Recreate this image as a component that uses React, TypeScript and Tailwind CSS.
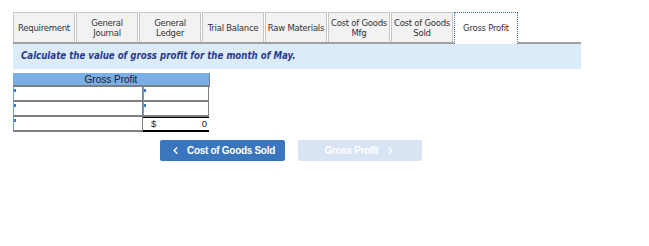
import { ChevronLeft, ChevronRight } from "lucide-react";

const tabs = [
  ["Requirement"],
  ["General", "Journal"],
  ["General", "Ledger"],
  ["Trial Balance"],
  ["Raw Materials"],
  ["Cost of Goods", "Mfg"],
  ["Cost of Goods", "Sold"],
];

function InputCell({ wide }: { wide?: boolean }) {
  return (
    <div
      className={`${wide ? "w-[130px]" : "w-[66px]"} h-[15px] bg-white border-b-2 border-[#7f7f7f] border-r border-r-[#7f7f7f] relative`}
    >
      <span className="absolute left-0 top-0 w-px h-full bg-[#6f9fd8]" />
      <span className="absolute left-px top-[2px] w-[2px] h-[3px] bg-[#3a78c9]" />
    </div>
  );
}

export default function App() {
  return (
    <div
      className="w-[649px] h-[246px] bg-white pt-[12px] pl-[13px]"
      style={{ fontFamily: "'DejaVu Sans', Verdana, sans-serif" }}
    >
      <div className="w-[568px]">
        {/* tab strip */}
        <div className="flex items-end h-[32px] border-b-2 border-[#a0a0a0]">
          {tabs.map((t, i) => (
            <div
              key={i}
              className="w-[62px] h-[30px] mr-[1px] bg-[#f2f2f2] border border-[#c6c6c6] border-b-0 flex flex-col items-center justify-center text-[8.5px] leading-[10px] text-[#333] text-center tracking-[-0.25px]"
            >
              {t.map((l) => (
                <span key={l} className="whitespace-nowrap">
                  {l}
                </span>
              ))}
            </div>
          ))}
          <div className="w-[64px] h-[32px] -mb-[2px] bg-white border border-dotted border-[#3d6fb5] border-b-0 flex items-center justify-center text-[8.5px] text-[#333] tracking-[-0.25px]">
            Gross Profit
          </div>
        </div>

        {/* instruction band */}
        <div className="h-[25px] bg-[#dbebf9] flex items-center pl-[8px]">
          <span
            className="text-[9.6px] font-bold italic text-[#2a3a8a]"
            style={{ fontFamily: "'DejaVu Sans Condensed', 'DejaVu Sans', sans-serif" }}
          >
            Calculate the value of gross profit for the month of May.
          </span>
        </div>
      </div>

      {/* table */}
      <div className="mt-[4px] w-[197px]" style={{ fontFamily: "'Liberation Sans', Arial, sans-serif" }}>
        <div className="h-[14px] bg-[#7aaee6] border-r border-[#7f7f7f] border-b-2 border-b-[#7f7f7f] flex items-center justify-center text-[10px] text-[#1a1a1a]">
          Gross Profit
        </div>
        <div className="flex">
          <InputCell wide />
          <InputCell />
        </div>
        <div className="flex">
          <InputCell wide />
          <InputCell />
        </div>
        <div className="flex">
          <InputCell wide />
          <div className="w-[66px] h-[15px] bg-white border-t border-black border-b-2 border-b-black flex items-center justify-between px-[8px] pr-[2px] text-[9.5px] text-[#222]">
            <span>$</span>
            <span>0</span>
          </div>
        </div>
      </div>

      {/* nav buttons */}
      <div className="flex mt-[8px] ml-[147px] gap-[13px]" style={{ fontFamily: "'Liberation Sans', Arial, sans-serif" }}>
        <button className="w-[125px] h-[21px] rounded-[2px] bg-[#3a76bd] text-white text-[10px] font-bold flex items-center justify-center gap-[6px] tracking-[-0.3px]">
          <ChevronLeft size={11} strokeWidth={3} />
          Cost of Goods Sold
        </button>
        <button className="w-[124px] h-[21px] rounded-[2px] bg-[#d8e4f3] text-white text-[10px] font-bold flex items-center justify-center gap-[6px] tracking-[-0.3px]">
          Gross Profit
          <ChevronRight size={11} strokeWidth={3} />
        </button>
      </div>
    </div>
  );
}
